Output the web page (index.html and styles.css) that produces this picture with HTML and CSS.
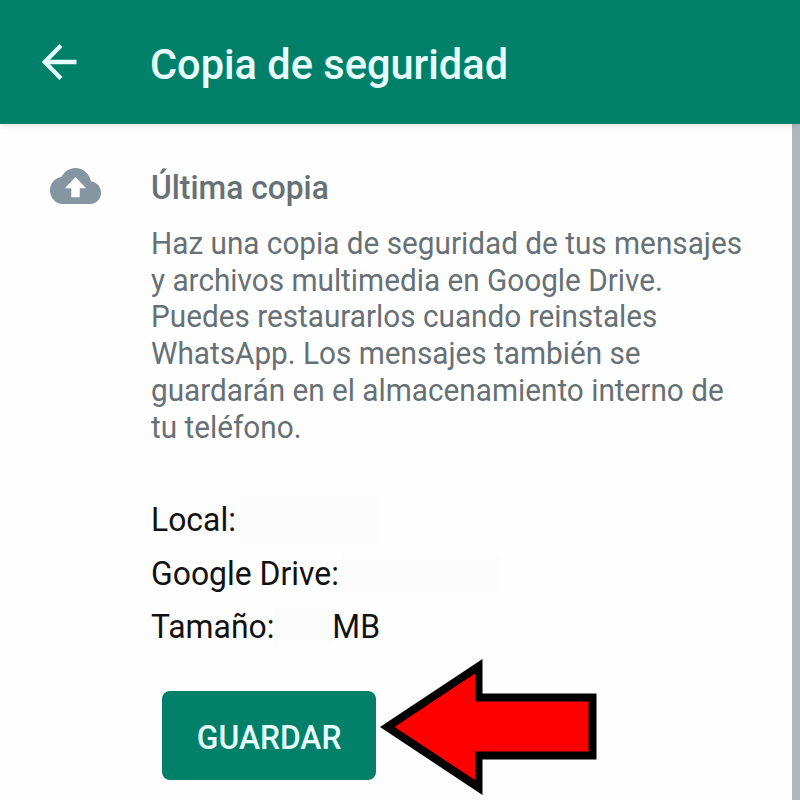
FILE: index.html
```html
<!DOCTYPE html>
<html lang="es">
<head>
<meta charset="utf-8">
<title>Copia de seguridad</title>
<link rel="stylesheet" href="styles.css">
</head>
<body>
<header class="bar">
  <svg class="back" viewBox="0 0 36 36"><path d="M34.500 18H3M19 1.500L2.800 18L19 34.500"/></svg>
  <h1 class="title">Copia de seguridad</h1>
</header>
<main class="page">
  <svg class="cloud" viewBox="0 4 24 16" preserveAspectRatio="none"><path d="M19.350 10.040C18.670 6.590 15.640 4 12 4 9.110 4 6.600 5.640 5.350 8.040 2.340 8.360 0 10.910 0 14c0 3.310 2.690 6 6 6h13c2.760 0 5-2.240 5-5 0-2.640-2.050-4.780-4.650-4.960zM14 13v4h-4v-4H7l5-5 5 5h-3z"/></svg>
  <section class="content">
    <h2 class="heading">Última copia</h2>
    <p class="text">Haz una copia de seguridad de tus mensajes<br>y archivos multimedia en Google Drive.<br>Puedes restaurarlos cuando reinstales<br>WhatsApp. Los mensajes también se<br>guardarán en el almacenamiento interno de<br>tu teléfono.</p>
    <ul class="details">
      <li>Local:<span class="blank blank-local"></span></li>
      <li>Google Drive:<span class="blank blank-drive"></span></li>
      <li>Tamaño:<span class="blank blank-size"></span>MB</li>
    </ul>
    <div class="actions">
      <button class="save"><span class="label">GUARDAR</span></button>
      <svg class="arrow" viewBox="0 0 217 136"><path d="M0 68L102.500 0V34.500H216.500V100.500H102.500V136z"/><path class="fill" d="M14.500 68L95 14.500V42.500H208.500V92.500H95V121z"/></svg>
    </div>
  </section>
</main>
</body>
</html>
```
FILE: styles.css
```css
* { box-sizing: border-box; }
body {
  margin: 0;
  height: 800px;
  overflow: hidden;
  background: #fefefe;
  font-family: Roboto, "Liberation Sans", sans-serif;
}
h1, h2, p, ul { margin: 0; padding: 0; font-weight: 400; }
/* Type is slightly condensed throughout. */
.title, .heading, .text, .details { transform-origin: 0 0; white-space: nowrap; }
.bar {
  position: relative;
  display: flex;
  align-items: center;
  height: 124px;
  padding-left: 41.500px;
  background: #008069;
  box-shadow: 0 2px 6px rgba(0, 0, 0, .1);
}
.back { width: 36px; height: 36px; fill: none; stroke: #e8ffff; stroke-width: 4.300; }
.title {
  margin: 3px 0 0 72px;
  font-size: 43px;
  font-weight: 500;
  color: #e8ffff;
  transform: scaleX(.966);
}
.page {
  display: flex;
  height: 676px;
  padding: 43px 0 0 50px;
  border-right: 8px solid #b0b8bf;
}
.cloud { width: 51px; height: 36px; margin-top: 1px; fill: #8696a0; flex: none; }
.content { margin-left: 49.500px; }
.heading {
  margin-top: 1px;
  font-size: 33px;
  line-height: 40px;
  font-weight: 500;
  color: #667075;
  transform: scaleX(.962);
}
.text {
  margin-top: 18px;
  width: 630px;
  font-size: 31px;
  line-height: 36.700px;
  color: #667075;
  transform: scaleX(.959);
}
.details {
  margin-top: 46.500px;
  list-style: none;
  font-size: 33px;
  line-height: 53.800px;
  color: #111;
  transform: scaleX(.966);
}
.details li { display: flex; align-items: center; height: 53.800px; }
.blank { height: 38px; background: #fcfcfc; }
.blank-local { width: 145px; height: 50px; margin-left: 4px; }
.blank-drive { width: 165px; margin-left: 2px; }
.blank-size { width: 59px; margin-right: 1px; }
.actions { display: flex; margin-top: 36.500px; padding-left: 11.500px; }
.save {
  width: 214px;
  height: 89px;
  padding: 5px 0 0;
  border: 0;
  border-radius: 8px;
  background: #008069;
  color: #e8ffff;
  font: 500 33px Roboto, "Liberation Sans", sans-serif;
}
.label { display: inline-block; transform: scaleX(.962); }
.arrow { width: 217px; height: 136px; margin: -32px 0 0 3.500px; }
.fill { fill: #f00; }
```
